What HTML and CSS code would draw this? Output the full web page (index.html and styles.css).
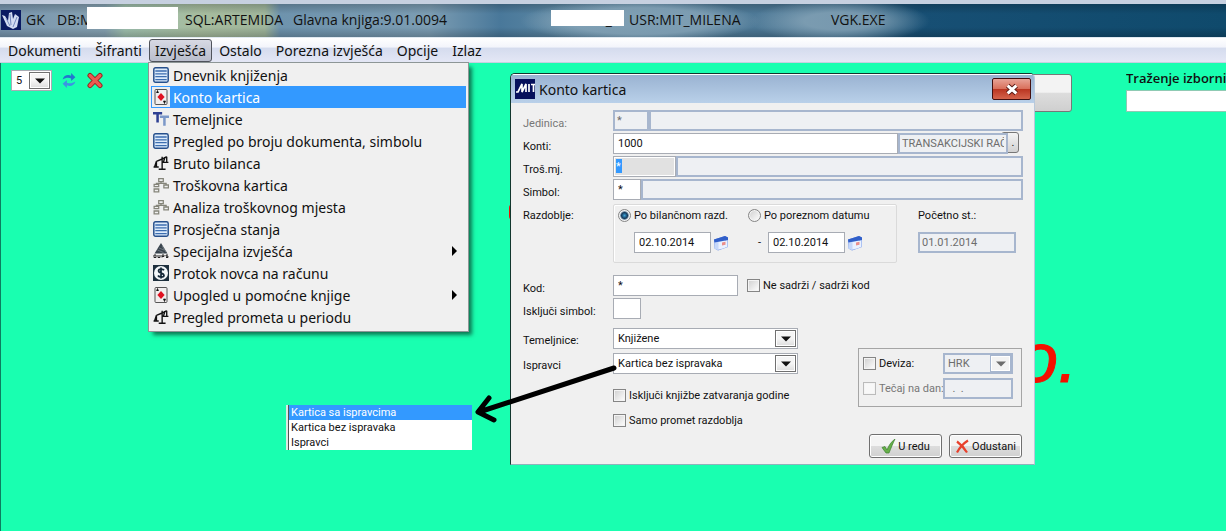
FILE: index.html
```html
<!DOCTYPE html>
<html lang="hr">
<head>
<meta charset="utf-8">
<title>GK - Glavna knjiga</title>
<link rel="stylesheet" href="styles.css">
</head>
<body>
<svg class="defs" aria-hidden="true">
  <symbol id="i-list" viewBox="0 0 14 14"><rect x=".7" y=".7" width="12.6" height="12.6" rx="1.5" fill="#dcebfb" stroke="#27508c" stroke-width="1.3"/><path d="M2 3.5h10M2 6h10M2 8.5h10M2 11h10" stroke="#3c6eb0" stroke-width="1.1"/></symbol>
  <symbol id="i-card" viewBox="0 0 14 16"><rect x="1" y=".5" width="12" height="15" rx="1" fill="#f1eeee" stroke="#555"/><path d="M2.500 4l1-2.500L4.500 4M9.500 12l1 2.500L11.500 12z" fill="#111" stroke="#111" stroke-width=".7"/><path d="M7 4l3.600 4L7 12 3.400 8z" fill="#e01020"/></symbol>
  <symbol id="i-tt" viewBox="0 0 14 14"><path d="M0 2h8M4 2v8" stroke="#2d3f93" stroke-width="2.2"/><path d="M6 5h8M10 5v8" stroke="#7c98c8" stroke-width="2.2"/></symbol>
  <symbol id="i-scale" viewBox="0 0 14 14"><path d="M8 1.500v11M5 12.500h6M3 5.500l5-2 4-2M3 5.500L1.500 10M3 5.500V10M.5 10.500H5M10.500 2L9 6.500M12 1.500V6.500M8.500 6.500H13.500" fill="none" stroke="#111" stroke-width="1.200"/></symbol>
  <symbol id="i-tree" viewBox="0 0 14 14"><path d="M5 1.500h4v2.500H5zM1 6.500h4v2H1zM9.500 7h4v2.500h-4zM1 10.500h4V13H1zM7 4v1.500M3 6.500v-1h8.500V7" fill="none" stroke="#85857a" stroke-width="1.1"/></symbol>
  <symbol id="i-durs" viewBox="0 0 16 16"><path d="M8 0l6.500 10.500h-13z" fill="#39444d"/><path d="M6 5l5 2M4.500 7l6 2.500M9 3l4 6" stroke="#8d979d" stroke-width=".6"/><path d="M1 12h2v2.500H1zM5 12v2.500h2V12M9 14.500V12h2v1.500H9M15 12h-2v1.200h2v1.300h-2" fill="none" stroke="#222" stroke-width="1"/></symbol>
  <symbol id="i-dollar" viewBox="0 0 16 16"><rect width="16" height="16" fill="#1d2f3d"/><circle cx="8" cy="8" r="7" fill="#f4f8fa"/><path d="M11 5.200C10 3.500 5.500 3.600 5.500 6S11 7.800 11 10.200 6 12.500 5 10.500M8 2.500v11" fill="none" stroke="#142838" stroke-width="1.700"/></symbol>
  <symbol id="i-cal" viewBox="0 0 16 16"><path d="M1 4.500L12 1l3 1.500v9.500L5 15.500l-3.500-2z" fill="#6f93e6"/><path d="M1.500 7L12 4.500v8.500l-7.500 2-3-1.500z" fill="#c5d7fa"/><path d="M5.500 7L14.500 5v7l-9 2.500z" fill="#eaf1ff"/><path d="M1 4.500L12 1l3 1.500v2.500L1.500 7.500z" fill="#315fc9"/><path d="M9 7.500l3.500-.7v3l-3.500.8z" fill="#ea8f8c"/></symbol>
  <symbol id="i-down" viewBox="0 0 10 6"><path d="M0 .5h10L5 5.500z" fill="currentColor"/></symbol>
</svg>

<header class="titlebar">
  <svg class="app-icon" viewBox="0 0 20 20"><rect width="20" height="20" fill="#0a1a62"/><path d="M1 5l3 1 3 5 1-8 3-1 1 7 2-5 4 3-2 10-4 2-6-3z" fill="#d3dcf2"/><path d="M5 8l4 8M9 4l1 11M16 7l-4 10" stroke="#7488bd" fill="none"/></svg>
  <span>GK</span>
  <span>DB:M</span>
  <span class="mask"></span>
  <span>SQL:ARTEMIDA</span>
  <span>Glavna knjiga:9.01.0094</span>
  <span class="mask mask-low">_</span>
  <span>USR:MIT_MILENA</span>
  <span>VGK.EXE</span>
</header>

<nav class="menubar">
  <button type="button">Dokumenti</button>
  <button type="button">Šifranti</button>
  <div class="menu-host">
    <button type="button" class="open">Izvješća</button>
    <ul class="menu">
      <li><button type="button"><svg><use href="#i-list"/></svg>Dnevnik knjiženja</button></li>
      <li><button type="button" class="selected"><svg><use href="#i-card"/></svg>Konto kartica</button></li>
      <li><button type="button"><svg><use href="#i-tt"/></svg>Temeljnice</button></li>
      <li><button type="button"><svg><use href="#i-list"/></svg>Pregled po broju dokumenta, simbolu</button></li>
      <li><button type="button"><svg><use href="#i-scale"/></svg>Bruto bilanca</button></li>
      <li><button type="button"><svg><use href="#i-tree"/></svg>Troškovna kartica</button></li>
      <li><button type="button"><svg><use href="#i-tree"/></svg>Analiza troškovnog mjesta</button></li>
      <li><button type="button"><svg><use href="#i-list"/></svg>Prosječna stanja</button></li>
      <li><button type="button" class="sub"><svg><use href="#i-durs"/></svg>Specijalna izvješća</button></li>
      <li><button type="button"><svg><use href="#i-dollar"/></svg>Protok novca na računu</button></li>
      <li><button type="button" class="sub"><svg><use href="#i-card"/></svg>Upogled u pomoćne knjige</button></li>
      <li><button type="button"><svg><use href="#i-scale"/></svg>Pregled prometa u periodu</button></li>
    </ul>
  </div>
  <button type="button">Ostalo</button>
  <button type="button">Porezna izvješća</button>
  <button type="button">Opcije</button>
  <button type="button">Izlaz</button>
</nav>

<main class="desktop">
  <div class="toolbar">
    <span class="combo combo-small"><select aria-label="Broj"><option>5</option></select><span class="arrow"><svg><use href="#i-down"/></svg></span></span>
    <button type="button" class="tool" aria-label="Osvježi"><svg viewBox="0 0 14 16"><path d="M1 7C2 3 6 2 9 3.500V1l4 4-4 3.500V6C7 5 4 5 1 7z" fill="#2376cf"/><path d="M13 9c-1 4-5 5-8 3.500V15l-4-4 4-3.500V10c2 1 5 1 8-1z" fill="#3c93e4"/></svg></button>
    <button type="button" class="tool" aria-label="Zatvori"><svg viewBox="0 0 16 16"><path d="M3 3l10 10M13 3L3 13" stroke="#8f211d" stroke-width="5" stroke-linecap="round"/><path d="M3 3l10 10M13 3L3 13" stroke="#ea5a50" stroke-width="3.200" stroke-linecap="round"/></svg></button>
  </div>
  <div class="search"><label for="q">Traženje izborni</label><input id="q" type="text"></div>
  <button type="button" class="back-button" aria-label="Gumb"></button>
  <div class="brand">o.</div>
  <div class="brand-edge"></div>

  <form class="dialog" onsubmit="return false">
    <div class="dialog-title">
      <svg viewBox="0 0 20 20"><rect width="20" height="20" fill="#06105c"/><path d="M1 13h2l4-8v8l4-8v8M14 5v8M16 5.500h4M18.500 5v8" fill="none" stroke="#fff" stroke-width="1.700"/></svg>
      <h1>Konto kartica</h1>
      <button type="button" class="close" aria-label="Zatvori"><svg viewBox="0 0 14 12"><path d="M3 2.500l8 7M11 2.500l-8 7" stroke="#5b1d18" stroke-width="4.600"/><path d="M3 2.500l8 7M11 2.500l-8 7" stroke="#fff" stroke-width="2.800"/></svg></button>
    </div>
    <div class="dialog-body">
      <div class="rows">
        <label class="muted" for="jed">Jedinica:</label>
        <div class="pair"><input id="jed" class="w-code ro" value="*" disabled><input class="grow ro" aria-label="Jedinica naziv" disabled></div>
        <label for="konti">Konti:</label>
        <div class="pair"><input id="konti" class="grow" value="1000"><input class="w-name ro" aria-label="Konto naziv" value="TRANSAKCIJSKI RAČUN" disabled><button type="button" class="dots">.</button></div>
        <label for="tros">Troš.mj.</label>
        <div class="pair"><div class="w-cost focused"><input id="tros" size="1" value="*"></div><input class="grow ro" aria-label="Mjesto naziv" disabled></div>
        <label for="simbol">Simbol:</label>
        <div class="pair"><input id="simbol" class="w-sym" value="*"><input class="grow ro" aria-label="Simbol naziv" disabled></div>
      </div>

      <div class="period">
        <span class="period-label">Razdoblje:</span>
        <div class="period-box">
          <div class="choice"><input type="radio" name="r" id="r1" checked><label for="r1">Po bilančnom razd.</label></div>
          <div class="choice"><input type="radio" name="r" id="r2"><label for="r2">Po poreznom datumu</label></div>
          <div class="date"><input aria-label="Od datuma" value="02.10.2014"><svg><use href="#i-cal"/></svg></div>
          <div class="date date-to"><span>-</span><input aria-label="Do datuma" value="02.10.2014"><svg><use href="#i-cal"/></svg></div>
        </div>
        <div class="start"><label for="poc">Početno st.:</label><input id="poc" class="ro" value="01.01.2014" disabled></div>
      </div>

      <div class="rows">
        <label for="kod">Kod:</label>
        <div class="pair"><input id="kod" class="w-kod" value="*"><div class="choice kod-choice"><input type="checkbox" id="c0"><label for="c0">Ne sadrži / sadrži kod</label></div></div>
        <label for="isk">Isključi simbol:</label>
        <div class="pair"><input id="isk" class="w-sym"></div>
      </div>

      <div class="lower">
        <div class="options">
          <label for="tem">Temeljnice:</label>
          <span class="combo"><select id="tem"><option>Knjižene</option></select><span class="arrow"><svg><use href="#i-down"/></svg></span></span>
          <label for="isp">Ispravci</label>
          <span class="combo"><select id="isp"><option>Kartica bez ispravaka</option><option>Kartica sa ispravcima</option><option>Ispravci</option></select><span class="arrow"><svg><use href="#i-down"/></svg></span></span>
          <div class="choice"><input type="checkbox" id="c1"><label for="c1">Isključi knjižbe zatvaranja godine</label></div>
          <div class="choice"><input type="checkbox" id="c2"><label for="c2">Samo promet razdoblja</label></div>
        </div>
        <div class="currency">
          <div class="choice"><input type="checkbox" id="c3"><label for="c3">Deviza:</label></div>
          <span class="combo ro-combo"><select aria-label="Valuta" disabled><option>HRK</option></select><span class="arrow"><svg><use href="#i-down"/></svg></span></span>
          <div class="choice muted"><input type="checkbox" id="c4" disabled><label for="c4">Tečaj na dan:</label></div>
          <input class="ro" aria-label="Datum tečaja" value="  .  ." disabled>
        </div>
      </div>

      <div class="actions">
        <button type="submit"><svg viewBox="0 0 15 15"><path d="M1 8.500l3-1 2 3.500C8 6 10 3 14 0 12 4 10 9 8 14H5z" fill="#67b04a" stroke="#3e8030" stroke-width=".7"/></svg>U redu</button>
        <button type="button"><svg viewBox="0 0 15 15"><path d="M2 2.500c4 3 7 6 10 11M13 1.500C9 4 5 8 2 13.500" stroke="#e8402c" stroke-width="2.200" fill="none"/></svg>Odustani</button>
      </div>
    </div>
  </form>

  <ul class="popup-list">
    <li class="selected">Kartica sa ispravcima</li>
    <li>Kartica bez ispravaka</li>
    <li>Ispravci</li>
  </ul>
  <svg class="pointer" viewBox="0 0 144 60" aria-hidden="true"><path d="M141 5L6 49M16 35L5 49M5 49L21 57" fill="none" stroke="#000" stroke-width="5" stroke-linecap="round" stroke-linejoin="round"/></svg>
</main>
</body>
</html>
```
FILE: styles.css
```css
* { box-sizing: border-box; }

body {
  margin: 0;
  min-height: 100vh;
  display: flex;
  flex-direction: column;
  overflow: hidden;
  font: 14px "Noto Sans", "Open Sans", sans-serif;
  color: #111;
}

button, input, select { font: inherit; color: inherit; }
ul { list-style: none; margin: 0; padding: 0; }
.defs { position: absolute; width: 0; height: 0; }

.titlebar {
  display: grid;
  grid-template-columns: 20px 31px 35px 91px 108px 265px 73px 207px 1fr;
  padding: 0 0 2px 1px;
  height: 38px;
  align-items: center;
  border-top: 4px solid #c6d0e0;
  border-bottom: 1px solid #dfe8f0;
  font: 14px "Open Sans", sans-serif;
  white-space: nowrap;
  background:
    radial-gradient(ellipse 120px 22px at 640px 17px, #87a5b8cc 60%, #87a5b800),
    radial-gradient(ellipse 90px 22px at 840px 17px, #87a5b8cc 40%, #87a5b800),
    linear-gradient(#0003, #0000 30%, #0000 70%, #0003),
    linear-gradient(90deg, #7895ae 0, #86a2b2 105px, #9fc0ae 125px, #a6bc9e 200px, #9fb59b 265px, #6e93ad 280px, #7b9cb2 430px, #49789a 500px, #5c87a3 560px, #4a7694 800px, #174f74 920px, #0f4a6c 1226px);
}
.titlebar span:nth-of-type(1), .titlebar span:nth-of-type(2) { padding-left: 5px; }
.titlebar span:nth-of-type(4) { padding-left: 7px; }
.titlebar span:nth-of-type(5) { padding-left: 7px; }
.titlebar span:nth-of-type(7) { padding-left: 5px; }
.app-icon { width: 20px; height: 20px; }
.titlebar .mask { align-self: start; height: 22px; margin-top: 3px; background: #fff; }
.titlebar .mask-low { height: 16px; margin-top: 6px; padding-right: 12px; line-height: 20px; text-align: right; }

.menubar {
  display: flex;
  align-items: center;
  height: 25px;
  padding-left: 1px;
  background: linear-gradient(#fff 0, #f3f5fb 35%, #d5dcee 42%, #e4e7f5 96%, #a9b8cc);
}
.menubar > button, .open {
  height: 23px;
  padding: 0 6px;
  border: 1px solid transparent;
  border-radius: 3px;
  background: none;
  line-height: 20px;
}
.menu-host { position: relative; }
.menubar .open { padding: 0 5px; border-color: #50545c; background: linear-gradient(#d7d9e3, #b9bdcc); }
.menu {
  position: absolute;
  z-index: 3;
  top: 23px;
  left: -1px;
  width: 321px;
  padding: 1px 2px 3px;
  border: 1px solid #8d9696;
  background: #f0f0f0;
  box-shadow: 4px 4px 4px -1px #0008;
}
.menu button {
  display: flex;
  align-items: center;
  gap: 4px;
  width: 100%;
  height: 22px;
  padding: 0 2px;
  border: 0;
  background: none;
  text-align: left;
  white-space: nowrap;
}
.menu svg { width: 16px; height: 16px; }
.menu .selected { color: #fff; background: #3399ff; }
.menu .selected svg { width: 18px; height: 20px; padding: 2px 1px; margin-left: -1px; margin-right: -1px; background: #eee; }
.menu .sub::after {
  content: "";
  margin-left: auto;
  margin-right: 7px;
  border: 5px solid transparent;
  border-left-color: #000;
  border-right: 0;
}

.desktop { position: relative; flex: 1; background: #19ffb0; border-left: 1px solid #0c7d60; }

.toolbar { display: flex; align-items: center; gap: 8px; padding: 7px 10px; }
.tool { width: 18px; height: 20px; padding: 1px; border: 0; background: none; }
.tool svg { display: block; width: 16px; height: 17px; }

.search {
  position: absolute;
  top: 7px;
  left: 1125px;
  right: 0;
  overflow: hidden;
  font: 600 13px "Open Sans", sans-serif;
  white-space: nowrap;
}
.search label { display: block; height: 20px; line-height: 16px; }
.search input { display: block; width: 150px; height: 22px; border: 1px solid #8fcab3; background: #fff; }

.back-button {
  position: absolute;
  top: 11px;
  left: 971px;
  width: 100px;
  height: 38px;
  border: 1px solid #777;
  border-radius: 3px;
  background: linear-gradient(#f3f3f3 48%, #ddd 50%, #cfcfcf);
}
.brand {
  position: absolute;
  top: 255px;
  left: 1018px;
  font: italic 70px "Liberation Sans", Arial, sans-serif;
  -webkit-text-stroke: 1px #f50f00;
  color: #f50f00;
}
.brand-edge { position: absolute; top: 141px; left: 508px; width: 8px; height: 16px; border-radius: 8px; background: #f50f00; }

.dialog {
  position: absolute;
  top: 10px;
  left: 509px;
  width: 525px;
  border: 1px solid #12362e;
  border-right-color: #b7c8da;
  border-bottom-color: #8fb3bb;
  border-radius: 5px 5px 0 0;
  overflow: hidden;
  background: #f0f0f0;
  font: 11px Roboto, "Liberation Sans", sans-serif;
}
.dialog-title {
  display: flex;
  align-items: center;
  gap: 4px;
  height: 29px;
  padding: 0 3px 0 4px;
  border-top: 1px solid #fff;
  background: linear-gradient(#9ab3d2, #b9d0e9);
}
.dialog-title > svg { width: 20px; height: 20px; }
.dialog-title h1 { flex: 1; margin: 0; font: 14px "Noto Sans", sans-serif; }
.close {
  width: 39px;
  height: 22px;
  padding: 0;
  border: 1px solid #431010;
  border-radius: 2px;
  background: linear-gradient(#e8a497 0, #d9705c 48%, #b93420 50%, #d5644c);
}
.close svg { display: block; width: 16px; height: 13px; margin: auto; }

.dialog-body { padding: 7px 11px 6px 12px; }
.rows {
  display: grid;
  grid-template-columns: 90px 1fr;
  grid-auto-rows: 21px;
  row-gap: 2px;
}
.rows > label { align-self: end; line-height: 14px; }
.muted { color: #777; }

.dialog input:not([type]), .dialog select {
  height: 21px;
  min-width: 0;
  padding: 0 4px 1px;
  border: 1px solid #a8acb4;
  border-radius: 0;
  background: #fff;
}
.dialog input.ro { border: 2px solid #a7b6ce; background: #eef0f3; color: #6d6d6d; opacity: 1; padding: 0 2px 1px; }
.pair { display: flex; }
.pair .grow { flex: 1; }
.pair .w-code { width: 36px; border-right-width: 1px; }
.w-sym { width: 28px; }
.w-kod { width: 125px; }
.w-name { width: 110px; z-index: 1; }
.dots {
  width: 18px;
  margin: -1px 4px 1px -7px;
  padding: 0 0 0 6px;
  border: 1px solid #777;
  border-radius: 3px;
  background: linear-gradient(#f4f4f4, #d2d2d2);
}
.focused { width: 63px; padding: 2px; border: 1px solid #a8acb4; background: #e1e1e1; box-shadow: inset 0 0 0 1px #fff; }
.dialog .focused input { width: 6px; height: 14px; padding: 0; border: 0; background: #3399ff; color: #fff; display: block; }

.period { display: grid; grid-template-columns: 90px 284px 1fr; padding: 4px 0 12px; }
.period-label { padding-top: 5px; line-height: 14px; }
.period-box {
  display: grid;
  grid-template-columns: 130px 1fr;
  grid-template-rows: 18px 21px;
  row-gap: 8px;
  height: 59px;
  padding: 1px 4px;
  border: 1px solid #dadada;
  border-radius: 2px;
  box-shadow: inset 1px 1px #fff;
}
.choice { display: flex; align-items: center; gap: 3px; white-space: nowrap; }
.choice input { flex: none; appearance: none; width: 13px; height: 13px; margin: 0; border: 1px solid #858585; background: linear-gradient(135deg, #cfcfcf, #fff); box-shadow: inset 0 0 0 1px #f4f4f4; }
.choice input[type=radio] { border-radius: 50%; }
.choice input[type=radio]:checked { background: radial-gradient(circle, #3fa4d8 0, #143a5c 3px, #e8eef2 5px); }
.choice input:disabled { border-color: #bbb; background: #f8f8f8; }
.date { display: flex; align-items: center; padding-left: 16px; gap: 2px; }
.date input { width: 77px; }
.date svg { width: 16px; height: 18px; }
.date-to { padding-left: 10px; }
.date-to span { width: 8px; }
.start { padding-left: 21px; }
.start label { display: block; height: 28px; padding-top: 5px; line-height: 14px; }
.start input { display: block; width: 98px; }
.kod-choice { padding-left: 9px; }

.lower { display: flex; justify-content: space-between; align-items: flex-start; padding: 9px 1px 0 0; }
.options { display: grid; grid-template-columns: 90px 185px; grid-template-rows: 21px 21px 25px 21px; row-gap: 4px; }
.options > label { align-self: center; padding-top: 4px; }
.options .choice { grid-column: 2; padding-top: 9px; }
.options .choice:last-child { padding-top: 5px; }
.combo { position: relative; display: block; }
.combo select { appearance: none; display: block; width: 100%; height: 21px; padding: 0 4px 1px; border: 1px solid #a8acb4; background: #fff; }
.arrow {
  position: absolute;
  top: 2px;
  right: 2px;
  bottom: 2px;
  display: grid;
  place-items: center;
  width: 21px;
  border: 1px solid #707070;
  background: linear-gradient(#f5f5f5 50%, #ddd);
  box-shadow: inset 0 0 0 1px #fff;
  pointer-events: none;
}
.arrow svg { width: 10px; height: 6px; }
.combo-small { width: 41px; font: 11px Roboto, sans-serif; }

.currency {
  display: grid;
  grid-template-columns: 80px 70px;
  grid-auto-rows: 21px;
  row-gap: 4px;
  width: 164px;
  height: 59px;
  margin-top: 20px;
  padding: 4px 4px;
  border: 1px solid #a5a5a5;
}
.ro-combo { color: #6d6d6d; }
.dialog .ro-combo select { border: 2px solid #a7b6ce; background: #eef0f3; padding: 0 3px; opacity: 1; }
.ro-combo .arrow { border-color: #a7b6ce; background: #f3f3f3; }

.actions { display: flex; justify-content: flex-end; gap: 7px; padding: 6px 1px 0 0; }
.actions button {
  display: flex;
  align-items: center;
  justify-content: center;
  gap: 2px;
  width: 73px;
  height: 24px;
  padding: 0;
  border: 1px solid #707070;
  border-radius: 3px;
  background: linear-gradient(#f4f4f4 48%, #ddd 52%, #d0d0d0);
  box-shadow: inset 0 0 0 1px #fff;
}
.actions svg { width: 15px; height: 15px; }

.popup-list {
  position: absolute;
  top: 342px;
  left: 285px;
  width: 186px;
  border-left: 2px solid #dfe8e4;
  background: #fff;
  font: 11px/15px Roboto, "Liberation Sans", sans-serif;
}
.popup-list li { height: 15px; padding-left: 2px; border-left: 1px solid #555; }
.popup-list .selected { color: #fff; background: #3399ff; }

.pointer { position: absolute; top: 300px; left: 472px; width: 144px; height: 60px; }
```
